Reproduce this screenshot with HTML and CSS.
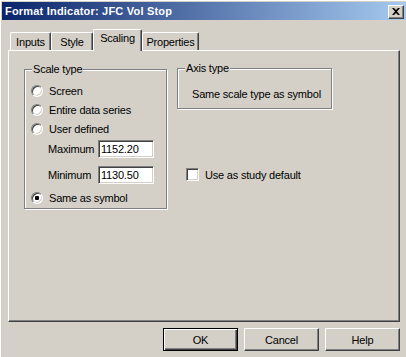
FILE: index.html
```html
<!DOCTYPE html>
<html lang="en">
<head>
    <meta charset="UTF-8">
    <title>Format Indicator: JFC Vol Stop</title>
    <link rel="stylesheet" href="styles.css">
</head>
<body>

<div class="window">
    <div class="titlebar">
        <span class="title">Format Indicator: JFC Vol Stop</span>
        <button class="close-btn" type="button">
            <svg width="8" height="7" viewBox="0 0 8 7">
                <path d="M0 0h2l2 2 2-2h2L5 3.5 8 7H6L4 5 2 7H0l3-3.5z" fill="#000"/>
            </svg>
        </button>
    </div>

    <div class="tabs">
        <div class="tab tab-inputs">Inputs</div>
        <div class="tab tab-style">Style</div>
        <div class="tab tab-scaling active">Scaling</div>
        <div class="tab tab-props">Properties</div>
    </div>

    <div class="panel">
        <div class="group scale-group">
            <span class="group-title">Scale type</span>
            <label class="row"><input type="radio" name="scale"> Screen</label>
            <label class="row"><input type="radio" name="scale"> Entire data series</label>
            <label class="row"><input type="radio" name="scale"> User defined</label>
            <div class="field field-max">
                <label for="maximum">Maximum</label>
                <input type="text" id="maximum" value="1152.20">
            </div>
            <div class="field field-min">
                <label for="minimum">Minimum</label>
                <input type="text" id="minimum" value="1130.50">
            </div>
            <label class="row row-last"><input type="radio" name="scale" checked> Same as symbol</label>
        </div>

        <div class="right-col">
            <div class="group axis-group">
                <span class="group-title">Axis type</span>
                Same scale type as symbol
            </div>
            <label class="check-row"><input type="checkbox"> Use as study default</label>
        </div>
    </div>

    <div class="buttons">
        <button type="button" class="btn default">OK</button>
        <button type="button" class="btn">Cancel</button>
        <button type="button" class="btn">Help</button>
    </div>
</div>

</body>
</html>
```

FILE: styles.css
```css
body {
    margin: 0;
    background: #d4d0c8;
    font-family: "Liberation Sans", Arial, sans-serif;
    font-size: 11px;
    letter-spacing: -0.2px;
    color: #000;
}
.window {
    height: 357px;
    box-sizing: border-box;
    border-left: 1px solid #fff;
    border-top: 1px solid #fff;
    padding: 1px 0 0 1px;
}

/* title bar */
.titlebar {
    height: 18px;
    display: flex;
    align-items: center;
    justify-content: space-between;
    background: linear-gradient(to right, #0a246a, #a6caf0);
    padding: 0 2px 0 3px;
}
.title {
    color: #fff;
    font-weight: bold;
    font-size: 11px;
    letter-spacing: 0.2px;
}
.close-btn {
    width: 16px;
    height: 14px;
    padding: 0;
    margin-top: 1px;
    display: flex;
    align-items: center;
    justify-content: center;
    background: #d4d0c8;
    border: 1px solid;
    border-color: #fff #404040 #404040 #fff;
    box-shadow: inset -1px -1px #808080;
}

/* tabs */
.tabs {
    display: flex;
    align-items: flex-end;
    height: 21px;
    margin: 9px 0 0 8px;
    position: relative;
    z-index: 1;
}
.tab {
    height: 18px;
    box-sizing: border-box;
    border: 1px solid;
    border-color: #fff #404040 transparent #fff;
    border-bottom: none;
    border-radius: 2px 2px 0 0;
    box-shadow: inset -1px 0 #808080;
    text-align: center;
    line-height: 16px;
    padding-top: 1px;
}
.tab-inputs { width: 41px; }
.tab-style { width: 42px; }
.tab-scaling { width: 49px; }
.tab-props { width: 57px; }
.tab.active {
    height: 22px;
    margin-bottom: -1px;
    background: #d4d0c8;
    line-height: 17px;
    padding-top: 0;
}

/* tab page */
.panel {
    width: 392px;
    height: 272px;
    box-sizing: border-box;
    margin-left: 6px;
    border: 1px solid;
    border-color: #fff #404040 #404040 #fff;
    box-shadow: inset -1px -1px #808080;
    display: flex;
    align-items: flex-start;
    gap: 10px;
    padding: 18px 0 0 15px;
}
.group {
    position: relative;
    box-sizing: border-box;
    border: 1px solid #808080;
    box-shadow: inset 1px 1px #fff, 1px 1px #fff;
}
.group-title {
    position: absolute;
    top: -7px;
    left: 7px;
    line-height: 13px;
    padding: 0 1px;
    background: #d4d0c8;
}
.scale-group {
    width: 143px;
    height: 140px;
    padding: 11px 0 0 6px;
}
.row {
    display: flex;
    align-items: center;
    gap: 6px;
    height: 19px;
}
.row-last {
    margin-top: 4px;
}
input[type="radio"] {
    appearance: none;
    margin: 0;
    width: 12px;
    height: 12px;
    box-sizing: border-box;
    border-radius: 50%;
    border: 1px solid;
    border-color: #808080 #fff #fff #808080;
    box-shadow: inset 1px 1px #404040, inset -1px -1px #d4d0c8;
    background: #fff;
}
input[type="radio"]:checked {
    background: radial-gradient(circle, #000 0 2px, #fff 2.5px);
}
.field {
    display: flex;
    align-items: center;
    margin-left: 17px;
}
.field label {
    width: 50px;
}
.field-max {
    margin-top: 2px;
}
.field-min {
    margin-top: 8px;
}
.field input {
    width: 56px;
    height: 18px;
    box-sizing: border-box;
    margin: 0;
    padding: 0 2px;
    font: inherit;
    letter-spacing: inherit;
    border: 1px solid;
    border-color: #808080 #fff #fff #808080;
    box-shadow: inset 1px 1px #404040, inset -1px -1px #d4d0c8;
    background: #fff;
    outline: none;
}

.right-col {
    display: flex;
    flex-direction: column;
    margin-top: -1px;
}
.axis-group {
    width: 155px;
    height: 41px;
    padding: 19px 0 0 14px;
    line-height: 13px;
}
.check-row {
    display: flex;
    align-items: center;
    gap: 6px;
    margin: 59px 0 0 9px;
}
input[type="checkbox"] {
    appearance: none;
    margin: 0;
    width: 13px;
    height: 13px;
    box-sizing: border-box;
    border: 1px solid;
    border-color: #808080 #fff #fff #808080;
    box-shadow: inset 1px 1px #404040, inset -1px -1px #d4d0c8;
    background: #fff;
}

/* dialog buttons */
.buttons {
    width: 392px;
    margin: 6px 0 0 6px;
    display: flex;
    justify-content: flex-end;
    gap: 6px;
}
.btn {
    width: 75px;
    height: 23px;
    padding: 0;
    font: inherit;
    letter-spacing: inherit;
    color: #000;
    background: #d4d0c8;
    border: 1px solid;
    border-color: #fff #404040 #404040 #fff;
    box-shadow: inset -1px -1px #808080;
}
.btn.default {
    border: 1px solid #000;
    box-shadow: inset 1px 1px #fff, inset -1px -1px #404040, inset -2px -2px #808080;
}
```
